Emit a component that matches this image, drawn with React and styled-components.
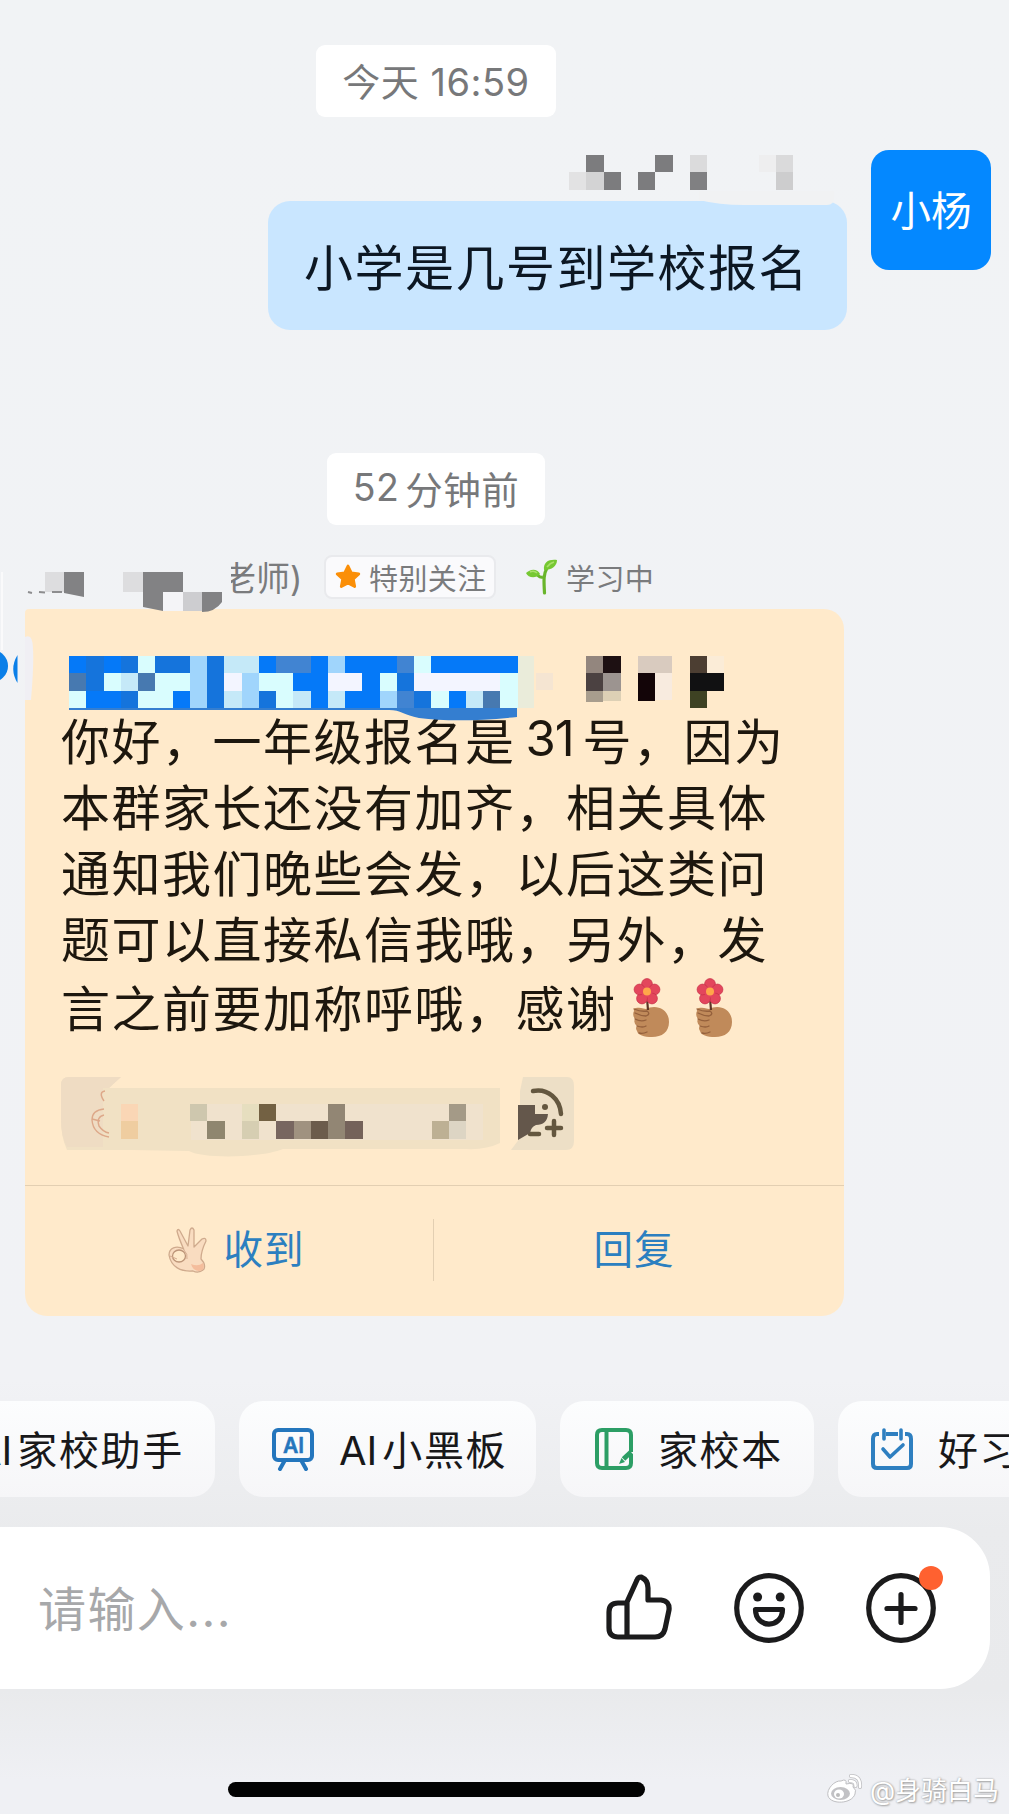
import React from 'react'
import styled, { createGlobalStyle } from 'styled-components'

const GlobalStyle = createGlobalStyle`
  * {
    box-sizing: border-box;
  }

  body {
    margin: 0;
    font-family: Inter, 'Noto Sans CJK SC', sans-serif;
    background: #f1f3f5;
  }

  svg {
    display: block;
    flex-shrink: 0;
  }
`

const CELL = 17.25

const senderMask = [
  { x: 0, y: 1, fill: '#e2e2e3' },
  { x: 1, y: 1, fill: '#d3d3d4' },
  { x: 1, y: 0, fill: '#7c7c7e' },
  { x: 2, y: 1, fill: '#7c7c7e' },
  { x: 4, y: 1, fill: '#7c7c7e' },
  { x: 5, y: 0, fill: '#7c7c7e' },
  { x: 7, y: 0, fill: '#dbdbdc' },
  { x: 7, y: 1, fill: '#808082' },
  { x: 11, y: 0, fill: '#eeeeef' },
  { x: 12, y: 0, fill: '#dadadb' },
  { x: 12, y: 1, fill: '#cdcdce' }
]

const mentionColors = {
  b: '#0579f8',
  c: '#1574dc',
  m: '#4184d2',
  d: '#4779b0',
  l: '#a0d5fc',
  p: '#c5e9f8',
  e: '#d9fdfe',
  w: '#f3f5ff'
}

const mentionRows = [
  'bcbcecclcppbmmblbbbmebbbbb',
  'dcepdeelcwleebbwwbecwwwwwe',
  'ebbceeblcplcepbpbblmcebpde'
]

const wordMask = [
  { x: 0, y: 0, fill: '#93867e' },
  { x: 1, y: 0, fill: '#1d1012' },
  { x: 0, y: 1, fill: '#4b4141' },
  { x: 1, y: 1, fill: '#9c9490' },
  { x: 0, y: 2, fill: '#a89d8d', h: 11 },
  { x: 1, y: 2, fill: '#ddd0b5', h: 10 },
  { x: 3, y: 0, fill: '#d9cbbf', w: 2 },
  { x: 3, y: 1, fill: '#130508', h: 27.5 },
  { x: 4, y: 1, fill: '#f8ebdf', h: 27 },
  { x: 6, y: 0, fill: '#4c3e32' },
  { x: 7, y: 0, fill: '#fbecd7' },
  { x: 6, y: 1, fill: '#111112', w: 2 },
  { x: 6, y: 2, fill: '#3e4223', h: 17 }
]

const reactionMask = [
  { x: 0, y: 0, fill: '#fad6b5' },
  { x: 0, y: 1, fill: '#efcda0' },
  { x: 4, y: 0, fill: '#cec7ae' },
  { x: 5, y: 1, fill: '#8f866f' },
  { x: 7, y: 0, fill: '#e6debf' },
  { x: 7, y: 1, fill: '#d6ceb2' },
  { x: 8, y: 0, fill: '#736143' },
  { x: 9, y: 1, fill: '#786660' },
  { x: 10, y: 1, fill: '#a09280' },
  { x: 11, y: 1, fill: '#6c5c4c' },
  { x: 12, y: 0, fill: '#928674' },
  { x: 12, y: 1, fill: '#928674' },
  { x: 13, y: 1, fill: '#74625a' },
  { x: 18, y: 1, fill: '#bdb094' },
  { x: 19, y: 0, fill: '#a49a87' },
  { x: 19, y: 1, fill: '#ddd5c4' }
]

const bodyLines = [
  '本群家长还没有加齐，相关具体',
  '通知我们晚些会发，以后这类问',
  '题可以直接私信我哦，另外，发'
]

const Cells = ({ cells }) =>
  cells.map(({ x, y, fill, w = 1, h = CELL }) => (
    <rect key={`${x}-${y}`} x={x * CELL} y={y * CELL} width={w * CELL} height={h} fill={fill} />
  ))

const SenderMask = () => (
  <svg width="270" height="52" viewBox="0 0 270 52">
    <path d="M130 36H265Q267 50 258 50H175Q150 50 130 45Z" fill="#f1f2f3" />
    <g shapeRendering="crispEdges">
      <Cells cells={senderMask} />
    </g>
  </svg>
)

const TeacherMask = () => (
  <TeacherMaskSvg width="206" height="58" viewBox="0 0 206 58">
    <g shapeRendering="crispEdges">
      <rect x="20" y="16" width="19" height="20" fill="#dddddf" />
      <rect x="98" y="16" width="20" height="20" fill="#dddddf" />
      <rect x="118" y="16" width="40" height="20" fill="#828284" />
      <rect x="138" y="36" width="20" height="19" fill="#f4f4f7" />
      <rect x="158" y="36" width="19" height="19" fill="#cdcdd0" />
    </g>
    <path d="M39 16H59V41Q49 39 39 37Z M118 36H138V55L118 51Z M177 36H197V46Q190 56 177 56Z" fill="#828284" />
    <path d="M3 36L7 37M14 36L20 36.5M27 36H37" stroke="#8d8d8f" strokeWidth="2" />
  </TeacherMaskSvg>
)

const MentionMask = () => (
  <svg width="670" height="66" viewBox="0 0 670 66">
    <path d="M0 50H448V61Q390 67 350 62C335 59 332 54 320 54H0Z" fill="#347ed0" />
    <g shapeRendering="crispEdges">
      <rect x="448" width="17" height="52" fill="#eaecda" />
      <rect x="467" y="17" width="17" height="17" fill="#f5e5d2" />
      {mentionRows.map((row, y) =>
        row.split('').map((key, x) => (
          <rect
            key={`${x}-${y}`}
            x={x * CELL}
            y={y * CELL}
            width={CELL}
            height={CELL}
            fill={mentionColors[key]}
          />
        ))
      )}
      <g transform="translate(517)">
        <Cells cells={wordMask} />
      </g>
    </g>
  </svg>
)

const Star = () => (
  <svg width="26" height="26" viewBox="0 0 26 26">
    <path
      d="M13 2l3.3 6.9 7.5 1-5.5 5.2 1.4 7.5L13 19l-6.7 3.6 1.4-7.5L2.2 9.9l7.5-1z"
      fill="#fb8f08"
      stroke="#fb8f08"
      strokeWidth="2.8"
      strokeLinejoin="round"
    />
  </svg>
)

const Sprout = () => (
  <svg width="32" height="36" viewBox="0 0 32 36">
    <path d="M18.5 34C18 23 17 16 21 9" fill="none" stroke="#69b52b" strokeWidth="3.2" strokeLinecap="round" />
    <path d="M17 18C13 19 10 15 12 14" fill="none" stroke="#69b52b" strokeWidth="3" />
    <path d="M0 14C4 10 11 9 14 15C10 20 2 19 0 14Z" fill="#76c832" />
    <path d="M18 11C17 3 23 0 31 1C31 7 26 11 18 11Z" fill="#76c832" />
    <path d="M4 13Q8 11 11 14M21 8Q24 4 28 3" fill="none" stroke="#a9e06a" strokeWidth="1.6" />
  </svg>
)

const FlowerHand = () => (
  <svg width="38" height="60" viewBox="0 0 38 60">
    <path
      d="M13 31C22 26 36 30 36 44C36 54 29 59 19 59C11 59 5 57 4 53Q2 50 4 48Q0 45 2 41Q-1 37 1 33C0 29 4 29 13 31Z"
      fill="#c08a5a"
    />
    <path
      d="M1 31Q8 34 14 33Q18 36 13 38Q8 38 2 35M2 41Q8 44 13 42M4 48Q10 50 13 48M6 55Q10 56 14 54"
      fill="none"
      stroke="#94603c"
      strokeWidth="1.3"
      strokeLinecap="round"
    />
    <path d="M14 20L15 32" stroke="#5d3527" strokeWidth="2.2" />
    <g fill="#e3465c" stroke="#c62f48" strokeWidth=".7">
      <circle cx="14" cy="6" r="5.4" />
      <circle cx="21.5" cy="11.5" r="5.4" />
      <circle cx="19" cy="20.5" r="5.4" />
      <circle cx="9" cy="20.5" r="5.4" />
      <circle cx="6.5" cy="11.5" r="5.4" />
    </g>
    <circle cx="14" cy="14" r="5.5" fill="#e3465c" />
    <circle cx="14" cy="13.6" r="4" fill="#ffa64a" />
  </svg>
)

const OkHand = () => (
  <svg width="40" height="46" viewBox="0 0 40 46">
    <path
      d="M16 23C13 16 10 9 9 4Q10 1 12 4L20 19L22 3Q24 -1 26 3V20L34 12Q38 10 38 14C35 20 33 27 33 32Q38 37 36 42Q31 47 25 44C13 45 3 40 1 28C1 21 8 18 16 22"
      fill="#f9dcc0"
      stroke="#cfaa8d"
      strokeWidth="1.3"
      strokeLinejoin="round"
    />
    <path d="M23 37Q30 40 35 36Q38 43 31 44Q25 44 23 37Z" fill="#f4bd9c" />
    <ellipse cx="11" cy="29" rx="6.5" ry="6" fill="#ffeaca" stroke="#bd9578" strokeWidth="1.3" />
    <path d="M2 29L9 32M16 23Q20 27 19 32" fill="none" stroke="#d6ad90" />
  </svg>
)

const ReactionMask = () => (
  <svg width="440" height="84" viewBox="0 0 440 84">
    <path
      d="M8 0H60Q52 7 48 11H439V66Q425 73 405 72H222C200 81 142 82 128 74L70 73H6Q0 60 0 42V8Q0 0 8 0Z"
      fill="#f1e1c4"
    />
    <path d="M8 0H60L48 11H42V70H6Q0 60 0 42V8Q0 0 8 0Z" fill="#efdcc3" />
    <rect x="130" y="27" width="292" height="36" fill="#f0e2cd" />
    <g fill="none" stroke="#dda889" strokeWidth="1.4">
      <path d="M44 14Q37 15 43 24M43 32Q31 33 31 43Q32 57 48 60M43 38Q35 40 38 49Q42 55 48 56" />
      <path d="M31 42L39 44" />
    </g>
    <g transform="translate(60 27)" shapeRendering="crispEdges">
      <Cells cells={reactionMask} />
    </g>
  </svg>
)

const AddReaction = () => (
  <svg width="66" height="74" viewBox="0 0 66 74">
    <path d="M12 0H56Q63 0 63 9V64Q63 73 55 73H0L9 61V14Z" fill="#eddfc6" />
    <g fill="none" stroke="#64573f" strokeWidth="4.5" strokeLinecap="round">
      <path d="M22 14C37 11 49 22 50 37M19 57H28M36 51H50M43 44V58" />
    </g>
    <circle cx="34" cy="30" r="3" fill="#64573f" />
    <path d="M7 28H24V37H37Q36 48 25 48Q20 50 19 56L7 63Z" fill="#64574b" />
  </svg>
)

const BoardIcon = () => (
  <svg width="44" height="44" viewBox="0 0 44 44" fill="none" stroke="#2476bd" strokeWidth="4">
    <rect x="3" y="3" width="38" height="30" rx="4" />
    <path d="M14 33L9 42M30 33L35 42" strokeLinecap="round" />
    <IconText x="22.5" y="26">
      AI
    </IconText>
  </svg>
)

const BookIcon = () => (
  <svg width="40" height="44" viewBox="0 0 40 44" fill="none" stroke="#2c9e65" strokeWidth="4">
    <path d="M37 25V8Q37 3 32 3H8Q3 3 3 8V36Q3 41 8 41H32Q37 41 37 36V34" />
    <path d="M12.5 4V40" />
    <path d="M37 25L29.5 32" strokeWidth="5" />
    <path d="M37 27V36" />
    <path d="M27.5 31L31 35L25 37Z" fill="#2c9e65" stroke="none" />
  </svg>
)

const CalendarIcon = () => (
  <svg width="44" height="44" viewBox="0 0 44 44" fill="none" stroke="#2e7fc0" strokeWidth="4">
    <path d="M9 7H7Q3 7 3 12V37Q3 41 7 41H37Q41 41 41 37V12Q41 7 37 7H35M16 7H28" />
    <path d="M14 3V12M31 3V12M13 22L20 30L33 18" strokeLinecap="round" strokeLinejoin="round" strokeWidth="3.6" />
  </svg>
)

const ThumbIcon = () => (
  <svg width="66" height="68" viewBox="0 0 66 68" fill="none" stroke="#1b1b1c" strokeWidth="5.2" strokeLinejoin="round">
    <path d="M21 63V28L31 6Q32 3 35 3Q42 6 42 14V26H55Q64 27 63 36L59 55Q57 63 49 63H12Q3 63 3 54V38Q3 29 12 29H21" />
  </svg>
)

const SmileIcon = () => (
  <svg width="70" height="70" viewBox="0 0 70 70" fill="none" stroke="#1b1b1c" strokeWidth="5.2">
    <circle cx="35" cy="35" r="32.3" />
    <path d="M21.500 36.500H48.500C48.500 56 21.500 56 21.500 36.500Z" strokeLinejoin="round" />
    <circle cx="23.600" cy="24" r="4.500" fill="#1b1b1c" stroke="none" />
    <circle cx="46.200" cy="24" r="4.500" fill="#1b1b1c" stroke="none" />
  </svg>
)

const PlusIcon = () => (
  <svg width="70" height="70" viewBox="0 0 70 70" fill="none" stroke="#1b1b1c" strokeWidth="5.2">
    <circle cx="35" cy="35" r="32.3" />
    <path d="M21 35.5H49M35 21.5V49.5" strokeLinecap="round" />
  </svg>
)

const WeiboIcon = () => (
  <svg width="37" height="32" viewBox="0 0 37 32">
    <path
      d="M15 8Q21 5 20 11Q29 9 27 14Q31 17 29 21C26 31 5 32 2 23C0 16 9 7 15 8Z"
      fill="#fff"
      stroke="#bfbfc2"
      strokeWidth="1"
    />
    <ellipse cx="14.5" cy="20.5" rx="9.5" ry="6.5" fill="#c2c2c5" />
    <ellipse cx="13" cy="21" rx="5" ry="4.5" fill="#fff" />
    <circle cx="12" cy="22" r="2" fill="#bbb" />
    <path d="M25 3Q35 3 34 14M24 8Q30 8 29.5 13" fill="none" stroke="#bfbfc2" strokeWidth="4" strokeLinecap="round" />
    <path d="M25 3Q35 3 34 14M24 8Q30 8 29.5 13" fill="none" stroke="#fff" strokeWidth="2.4" strokeLinecap="round" />
  </svg>
)

const App = () => (
  <>
    <GlobalStyle />
    <Screen>
      <TimePill width={240} size={38}>
        今天 16:59
      </TimePill>

      <Outgoing>
        <OutgoingMain>
          <SenderMask />
          <Bubble>小学是几号到学校报名</Bubble>
        </OutgoingMain>
        <Avatar>小杨</Avatar>
      </Outgoing>

      <TimePill width={218} size={37.5}>
        <Digits>52</Digits>分钟前
      </TimePill>

      <SenderRow>
        <TeacherMask />
        <TeacherName>老师)</TeacherName>
        <FollowTag>
          <Star />
          特别关注
        </FollowTag>
        <Status>
          <Sprout />
          学习中
        </Status>
      </SenderRow>

      <CardRow>
        <PeekAvatar width="32" height="120" viewBox="0 0 32 120">
          <rect x="1" y="-37" width="2" height="78" fill="#fafafb" />
          <path d="M25 28Q33 24 33 40Q34 55 31 91H25Z" fill="#f0eff4" />
          <circle cx="-8" cy="57" r="16" fill="#0a7fe8" />
          <path d="M17.5 46V74Q9 60 17.5 46Z" fill="#0a7fe8" />
        </PeekAvatar>
        <Card>
          <CardBody>
            <MentionMask />
            <Line>
              你好，一年级报名是<BodyDigits>31</BodyDigits>号，因为
            </Line>
            {bodyLines.map(line => (
              <Line key={line}>{line}</Line>
            ))}
            <Line last>
              言之前要加称呼哦，感谢
              <Emojis>
                <FlowerHand />
                <FlowerHand />
              </Emojis>
            </Line>
            <Reactions>
              <ReactionMask />
              <AddReaction />
            </Reactions>
          </CardBody>
          <CardActions>
            <Action width={408} shift={14}>
              <OkHand />
              <ActionText>收到</ActionText>
            </Action>
            <Separator />
            <Action width={410} shift={-10}>
              <ActionText>回复</ActionText>
            </Action>
          </CardActions>
        </Card>
      </CardRow>

      <QuickBar>
        <Chip width={241} left={0}>
          <ChipText>
            <Latin>AI</Latin>家校助手
          </ChipText>
        </Chip>
        <Chip width={297} left={32}>
          <BoardIcon />
          <ChipText>
            <Latin>AI</Latin>小黑板
          </ChipText>
        </Chip>
        <Chip width={254} left={34}>
          <BookIcon />
          <ChipText>家校本</ChipText>
        </Chip>
        <Chip width={260} left={32}>
          <CalendarIcon />
          <ChipText>好习惯</ChipText>
        </Chip>
      </QuickBar>

      <InputBar>
        <Placeholder>请输入...</Placeholder>
        <Tools>
          <ThumbIcon />
          <SmileIcon />
          <PlusButton>
            <PlusIcon />
            <Badge />
          </PlusButton>
        </Tools>
      </InputBar>

      <Footer>
        <HomeIndicator />
        <Watermark>
          <WeiboIcon />
          @身骑白马
        </Watermark>
      </Footer>
    </Screen>
  </>
)

const styleOnly = {
  shouldForwardProp: prop => !['width', 'size', 'left', 'last', 'shift'].includes(prop)
}

const Screen = styled.div`
  display: flex;
  flex-direction: column;
  width: 1009px;
  height: 1814px;
  padding-top: 45px;
  overflow: hidden;
  white-space: nowrap;
  background: linear-gradient(#f1f3f5 0, #f1f2f5 1380px, #eaebed 1530px, #e9eaec 1690px, #eff0f4 1780px);
`

const TimePill = styled.div.withConfig(styleOnly)`
  display: flex;
  align-items: center;
  justify-content: center;
  width: ${props => props.width}px;
  height: 72px;
  flex-shrink: 0;
  margin-left: ${props => 436 - props.width / 2}px;
  padding-bottom: 3px;
  border-radius: 9px;
  background: #fff;
  color: #77787a;
  font-size: ${props => props.size}px;
  letter-spacing: 0.5px;
`

const Digits = styled.span`
  margin-right: 6px;
`

const Outgoing = styled.div`
  display: flex;
  justify-content: flex-end;
  height: 336px;
  padding: 33px 18px 0 0;
  flex-shrink: 0;
`

const OutgoingMain = styled.div`
  display: flex;
  flex-direction: column;
  align-items: flex-end;
  padding-top: 5px;

  svg {
    z-index: 1;
    margin-right: 8px;
  }
`

const Bubble = styled.div`
  display: flex;
  align-items: center;
  width: 579px;
  height: 129px;
  margin-top: -6px;
  padding: 0 0 3px 36px;
  border-radius: 22px;
  background: #c9e6ff;
  color: #0c1723;
  font-size: 49px;
  letter-spacing: 1.5px;
`

const Avatar = styled.div`
  display: flex;
  align-items: center;
  justify-content: center;
  width: 120px;
  height: 120px;
  margin-left: 24px;
  padding-bottom: 4px;
  border-radius: 18px;
  background: #0488ff;
  color: #fff;
  font-size: 40.5px;
`

const SenderRow = styled.div`
  display: flex;
  align-items: center;
  height: 84px;
  flex-shrink: 0;
  padding: 19px 0 0 25px;
  color: #7a7b7d;
`

const TeacherMaskSvg = styled.svg`
  position: relative;
  z-index: 1;
  margin-top: 17px;
`

/* the first character runs under the mask */
const TeacherName = styled.div`
  width: 93px;
  overflow: hidden;
  font-size: 34px;
  text-indent: -9px;
`

const FollowTag = styled.div`
  display: flex;
  align-items: center;
  gap: 8px;
  width: 172px;
  height: 44px;
  padding-left: 9px;
  border: 2px solid #e9eaed;
  border-radius: 8px;
  background: #fafafc;
  font-size: 29px;
  letter-spacing: 0.4px;
`

const Status = styled.div`
  display: flex;
  align-items: center;
  gap: 8px;
  margin-left: 30px;
  font-size: 29px;
  letter-spacing: 0.4px;
`

const CardRow = styled.div`
  position: relative;
  display: flex;
  height: 707px;
  flex-shrink: 0;
  padding-left: 25px;
`

const PeekAvatar = styled.svg`
  position: absolute;
  left: 0;
  top: 0;
  overflow: visible;
`

const Card = styled.div`
  display: flex;
  flex-direction: column;
  width: 819px;
  border-radius: 4px 20px 22px 22px;
  background: #ffeacb;
`

const CardBody = styled.div`
  height: 576px;
  padding: 47px 0 0 36px;

  > svg {
    position: relative;
    z-index: 1;
    margin-left: 8px;
  }
`

const Line = styled.div.withConfig(styleOnly)`
  display: flex;
  align-items: center;
  height: 66px;
  margin-top: ${props => (props.last ? '3px' : '0')};
  color: #1d170e;
  font-size: 49px;
  letter-spacing: 1.5px;

  svg + & {
    margin-top: -17px;
  }
`

const BodyDigits = styled.span`
  width: 67px;
  padding-left: 10px;
  letter-spacing: -1px;
`

const Emojis = styled.div`
  display: flex;
  gap: 25px;
  margin: 6px 0 0 16px;
`

const Reactions = styled.div`
  display: flex;
  gap: 10px;
  margin-top: 39px;
`

const CardActions = styled.div`
  display: flex;
  align-items: center;
  height: 131px;
  padding-bottom: 2px;
  border-top: 1px solid #e3cfb2;
`

const Action = styled.div.withConfig(styleOnly)`
  display: flex;
  align-items: center;
  justify-content: center;
  gap: 16px;
  width: ${props => props.width}px;
  padding-left: ${props => Math.max(props.shift, 0)}px;
  padding-right: ${props => Math.max(-props.shift, 0)}px;
`

const ActionText = styled.span`
  padding-bottom: 7px;
  color: #2c7fc0;
  font-size: 39.5px;
  letter-spacing: 1px;
`

const Separator = styled.div`
  width: 1px;
  height: 62px;
  background: #e3cfb2;
`

const QuickBar = styled.div`
  display: flex;
  gap: 24px;
  height: 96px;
  margin: 85px 0 0 -26px;
  flex-shrink: 0;
`

const Chip = styled.div.withConfig(styleOnly)`
  display: flex;
  align-items: center;
  flex-shrink: 0;
  gap: 24px;
  width: ${props => props.width}px;
  padding-left: ${props => props.left}px;
  border-radius: 24px;
  background: linear-gradient(#fcfdfe, #f6f6f8);
  color: #18181a;
  font-size: 40px;
  letter-spacing: 1.6px;
`

const ChipText = styled.div`
  display: flex;
  align-items: baseline;
  padding-bottom: 2px;
`

const Latin = styled.span`
  margin-right: 5px;
  letter-spacing: 0;
`

const IconText = styled.text`
  fill: #2476bd;
  stroke: #2476bd;
  stroke-width: 0.5px;
  font-size: 21px;
  font-weight: 600;
  letter-spacing: 0;
  text-anchor: middle;
`

const InputBar = styled.div`
  display: flex;
  align-items: center;
  justify-content: space-between;
  width: 990px;
  height: 162px;
  flex-shrink: 0;
  margin-top: 30px;
  padding: 0 54px 0 38px;
  border-radius: 0 50px 50px 0;
  background: #fff;
`

const Placeholder = styled.div`
  padding-bottom: 4px;
  color: #a7a8aa;
  font-size: 48px;
  letter-spacing: 1.4px;
`

const Tools = styled.div`
  display: flex;
  align-items: center;
  gap: 62px;
`

const PlusButton = styled.div`
  position: relative;
`

const Badge = styled.div`
  position: absolute;
  top: -7px;
  right: -7px;
  width: 24px;
  height: 24px;
  border-radius: 50%;
  background: #ff6130;
`

const Footer = styled.div`
  display: flex;
  align-items: flex-end;
  justify-content: space-between;
  height: 125px;
  padding: 0 10px 7px 228px;
`

const HomeIndicator = styled.div`
  width: 417px;
  height: 15px;
  margin-bottom: 10px;
  border-radius: 8px;
  background: #020202;
`

const Watermark = styled.div`
  display: flex;
  align-items: center;
  gap: 7px;
  color: #fff;
  font-size: 26px;
  text-shadow: 0 0 2px #999, 1px 1px 2px #aaa;
`

export default App
